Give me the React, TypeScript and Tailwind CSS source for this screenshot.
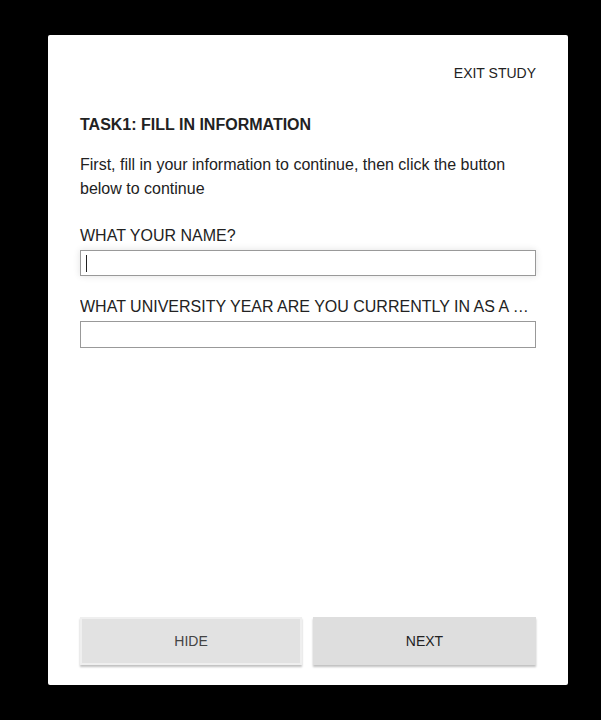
import React from "react";

export default function App() {
  return (
    <div
      className="w-[601px] h-[720px] bg-black pt-[35px] pl-[48px]"
      style={{ fontFamily: '"Liberation Sans", Arial, sans-serif' }}
    >
      <div className="w-[520px] h-[650px] bg-white rounded-[2px] flex flex-col px-[32px] pb-[20px] text-[#222]">
        <div className="flex justify-end pt-[30px]">
          <span className="text-[14px] leading-[16px]">EXIT STUDY</span>
        </div>
        <div className="mt-[34px] text-[16px] font-bold leading-[20px]">
          TASK1: FILL IN INFORMATION
        </div>
        <p className="mt-[18px] text-[16px] leading-[24px]">
          First, fill in your information to continue, then click the button below to continue
        </p>
        <div className="mt-[25px] text-[16px] leading-[20px]">WHAT YOUR NAME?</div>
        <div className="mt-[4px] h-[26px] border border-[#999] bg-white shadow-[0_0_7px_rgba(0,0,0,0.12)] flex items-center pl-[5px]">
          <span className="block w-px h-[17px] bg-[#222]" />
        </div>
        <div className="mt-[21px] text-[16px] leading-[20px] truncate whitespace-nowrap">
          WHAT UNIVERSITY YEAR ARE YOU CURRENTLY IN AS A STUDENT?
        </div>
        <div className="mt-[4px] h-[27px] border border-[#999] bg-white" />
        <div className="flex-1" />
        <div className="flex gap-[11px]">
          <button className="w-[222px] h-[48px] bg-[#e2e2e2] border-2 border-[#efefef] shadow-[0_2px_2px_rgba(0,0,0,0.25)] text-[14px] text-[#444]">
            HIDE
          </button>
          <button className="flex-1 h-[48px] bg-[#dedede] shadow-[0_2px_2px_rgba(0,0,0,0.25)] text-[14px] text-[#222]">
            NEXT
          </button>
        </div>
      </div>
    </div>
  );
}
